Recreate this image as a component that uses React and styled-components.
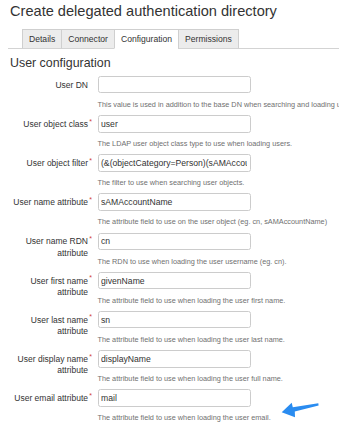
import React from "react";
import styled, { createGlobalStyle } from "styled-components";

const Global = createGlobalStyle`
  html, body { margin: 0; padding: 0; overflow: hidden; background: #fff; }
  body { font-family: "Liberation Sans", Arial, sans-serif; color: #333; }
  * { box-sizing: border-box; }
`;

const Page = styled.div`
  position: relative;
  width: 339px;
  height: 425px;
  padding: 0 0 0 10px;
  overflow: hidden;
`;

const Title = styled.h1`
  margin: 2px 0 0;
  font-size: 14.6px;
  line-height: 18px;
  font-weight: normal;
  color: #333;
  white-space: nowrap;
`;

const TabBar = styled.div`
  display: flex;
  margin: 8.5px 0 0 -2px;
  padding-left: 14px;
  border-bottom: 1px solid #d3d3d3;
`;

const Tab = styled.div`
  height: 19.5px;
  padding: 0 6px;
  margin-left: -1px;
  margin-bottom: -1px;
  display: flex;
  align-items: center;
  font-size: 8.6px;
  color: #333;
  border: 1px solid #cfcfcf;
  border-bottom: ${(p) => (p.$active ? "1px solid #fff" : "1px solid #d3d3d3")};
  background: ${(p) => (p.$active ? "#fff" : "#ececec")};
  height: ${(p) => (p.$active ? "20.5px" : "20.5px")};
  &:first-child { margin-left: 0; }
`;

const Heading = styled.h2`
  margin: 7.2px 0 0;
  font-size: 12.4px;
  line-height: 15px;
  font-weight: normal;
  color: #333;
`;

const Form = styled.div`
  margin-top: 4.8px;
  display: flex;
  flex-direction: column;
  gap: 5.27px;
`;

const Row = styled.div`
  display: flex;
  align-items: flex-start;
`;

const Label = styled.label`
  position: relative;
  width: 78px;
  flex: none;
  margin-right: 9.5px;
  padding-top: 3.8px;
  font-size: 8.5px;
  line-height: 11.6px;
  text-align: right;
  color: #333;
`;

const Required = styled.span`
  position: absolute;
  right: -4px;
  top: 2.5px;
  font-size: 7px;
  line-height: 7px;
  color: #d04437;
`;

const Field = styled.div`
  display: flex;
  flex-direction: column;
`;

const Input = styled.input`
  width: 153px;
  height: 17.5px;
  margin: 0;
  padding: 0 2.5px;
  border: 1px solid #cccccc;
  border-radius: 2.5px;
  background: #fff;
  font-family: "Liberation Sans", Arial, sans-serif;
  font-size: 8.65px;
  color: #333;
  outline: none;
`;

const Help = styled.div`
  margin-top: 6.4px;
  font-size: 7.3px;
  line-height: 10px;
  color: #707070;
  white-space: nowrap;
`;

const Arrow = styled.svg`
  position: absolute;
  left: 278px;
  top: 398px;
`;

const rows = [
  ["User DN", false, "", "This value is used in addition to the base DN when searching and loading users. An example is ou=Users."],
  ["User object class", true, "user", "The LDAP user object class type to use when loading users."],
  ["User object filter", true, "(&(objectCategory=Person)(sAMAccountName=*))", "The filter to use when searching user objects."],
  ["User name attribute", true, "sAMAccountName", "The attribute field to use on the user object (eg. cn, sAMAccountName)"],
  ["User name RDN attribute", true, "cn", "The RDN to use when loading the user username (eg. cn)."],
  ["User first name attribute", true, "givenName", "The attribute field to use when loading the user first name."],
  ["User last name attribute", true, "sn", "The attribute field to use when loading the user last name."],
  ["User display name attribute", true, "displayName", "The attribute field to use when loading the user full name."],
  ["User email attribute", true, "mail", "The attribute field to use when loading the user email."],
];

export default function App() {
  return (
    <>
      <Global />
      <Page>
        <Title>Create delegated authentication directory</Title>
        <TabBar>
          <Tab>Details</Tab>
          <Tab>Connector</Tab>
          <Tab $active>Configuration</Tab>
          <Tab>Permissions</Tab>
        </TabBar>
        <Heading>User configuration</Heading>
        <Form>
          {rows.map(([label, req, value, help]) => (
            <Row key={label}>
              <Label>
                {label}
                {req && <Required>*</Required>}
              </Label>
              <Field>
                <Input value={value} readOnly />
                <Help>{help}</Help>
              </Field>
            </Row>
          ))}
        </Form>
        <Arrow width="44" height="24" viewBox="0 0 44 24">
          <polygon
            points="3.7,14.3 13.7,4.7 14.8,9.3 40.3,5.2 40.6,7.4 16.8,13.4 17,19.3"
            fill="#2a8cf0"
          />
        </Arrow>
      </Page>
    </>
  );
}
